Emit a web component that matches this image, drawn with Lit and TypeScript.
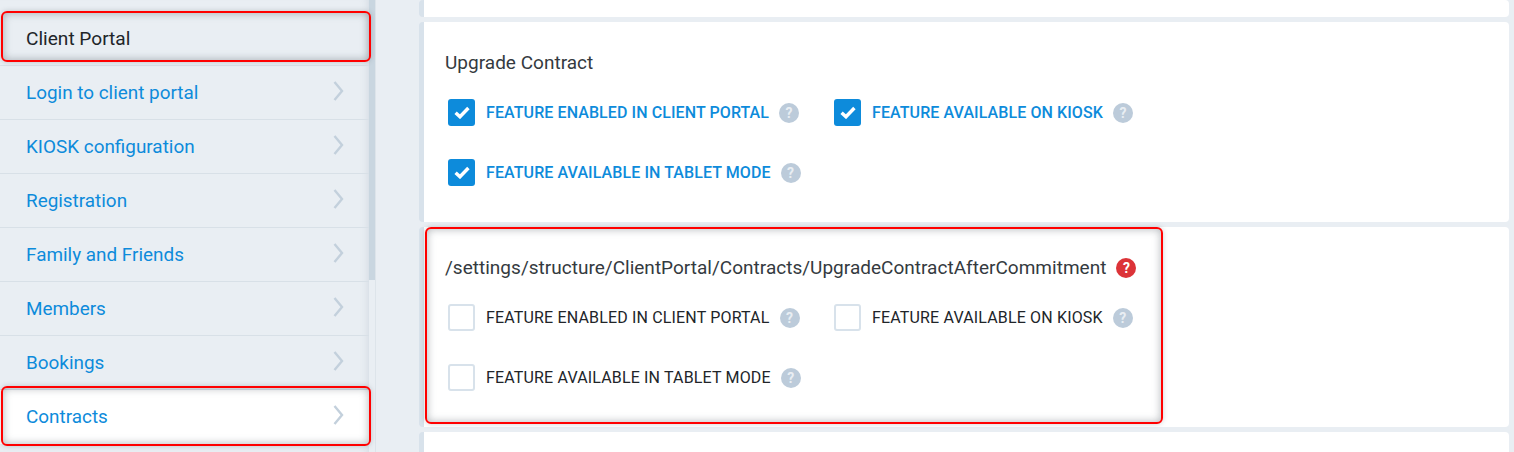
import { LitElement, css, html, nothing } from 'lit';
import { customElement } from 'lit/decorators.js';

const NAV = [
  'Login to client portal',
  'KIOSK configuration',
  'Registration',
  'Family and Friends',
  'Members',
  'Bookings',
  'Contracts',
];

const FIELDS = ['FEATURE ENABLED IN CLIENT PORTAL', 'FEATURE AVAILABLE ON KIOSK', 'FEATURE AVAILABLE IN TABLET MODE'];

@customElement('app-root')
export class AppRoot extends LitElement {
  static styles = css`
    :host {
      display: block;
      position: relative;
      width: 1514px;
      height: 452px;
      overflow: hidden;
      background: #e9eef3;
      font-family: Roboto, sans-serif;
    }

    * {
      box-sizing: border-box;
    }

    .layout {
      display: flex;
      height: 452px;
    }

    /* left menu */
    .sidebar {
      width: 369px;
      flex: none;
      padding-top: 12px;
      box-shadow: inset -8px 0 8px -8px rgba(120, 140, 160, 0.25);
    }

    .nav-head {
      height: 54px;
      display: flex;
      align-items: center;
      padding: 0 26px;
      font-size: 19.1px;
      color: #212529;
      border-bottom: 1px solid #d8e0e7;
    }

    .nav-item {
      height: 54px;
      display: flex;
      align-items: center;
      justify-content: space-between;
      padding: 0 25px 0 26px;
      font-size: 18.9px;
      color: #0d8bdb;
      border-bottom: 1px solid #d8e0e7;
    }

    .nav-item.active {
      background: #fff;
      border-bottom-color: transparent;
    }

    .chevron {
      width: 11px;
      height: 20px;
      margin-top: -3px;
      fill: none;
      stroke: #c3d0dc;
      stroke-width: 2.4;
    }

    .scrollbar {
      width: 7px;
      flex: none;
      background: #e9eef3;
      border-right: 1px solid #dde4ea;
    }

    .scrollbar-thumb {
      width: 6px;
      height: 280px;
      background: #c9d6e0;
    }

    /* settings cards */
    .content {
      margin-left: 43px;
      width: 1090px;
      display: flex;
      flex-direction: column;
      gap: 5px;
    }

    .card {
      flex: none;
      height: 200px;
      background: #fff;
      border-left: 5px solid #d8e2eb;
      border-radius: 4px;
      padding: 30px 0 0 21px;
    }

    .card.stub {
      height: 17px;
      padding: 0;
    }

    .card.tail {
      height: 40px;
    }

    .card-title {
      display: flex;
      align-items: center;
      gap: 10px;
      height: 21px;
      font-size: 19px;
      letter-spacing: 0.015px;
      color: #343a40;
    }

    .fields {
      display: grid;
      grid-template-columns: 386px auto;
      justify-content: start;
      row-gap: 33px;
      margin: 26px 0 0 3px;
    }

    .field {
      display: flex;
      align-items: center;
      height: 27px;
      font-size: 16px;
      font-weight: 400;
      letter-spacing: 0.16px;
      color: #212529;
    }

    .field.on {
      color: #0d8bdb;
      font-weight: 500;
      letter-spacing: 0.09px;
    }

    .box {
      width: 27px;
      height: 27px;
      flex: none;
      margin-right: 11px;
      border: 2px solid #d8e2eb;
      border-radius: 3px;
      background: #fff;
    }

    .on .box {
      border: none;
      background: #0d8bdb;
      display: flex;
      align-items: center;
      justify-content: center;
    }

    .tick {
      width: 16px;
      height: 13px;
      fill: none;
      stroke: #fff;
      stroke-width: 3.2;
    }

    .help {
      width: 20px;
      height: 20px;
      flex: none;
      margin-left: 10px;
      border-radius: 50%;
      background: #bccbda;
      color: #e9eef3;
      font-size: 14px;
      font-weight: 700;
      display: flex;
      align-items: center;
      justify-content: center;
    }

    .help.error {
      margin-left: 0;
      background: #dc3338;
      color: #fff;
    }

    /* red annotation boxes drawn over the screenshot */
    .mark {
      position: absolute;
      border: 2px solid #f00;
      border-radius: 6px;
      box-shadow: inset 0 0 8px rgba(60, 70, 80, 0.4), 0 0 5px rgba(60, 70, 80, 0.25);
      pointer-events: none;
    }

    .mark-head {
      left: 1px;
      top: 11px;
      width: 370px;
      height: 51px;
    }

    .mark-contracts {
      left: 1px;
      top: 386px;
      width: 370px;
      height: 60px;
    }

    .mark-card {
      left: 425px;
      top: 227px;
      width: 738px;
      height: 197px;
    }
  `;

  private renderFields(on: boolean) {
    return html`
      <div class="fields">
        ${FIELDS.map(
          (label) => html`
            <div class="field ${on ? 'on' : ''}">
              <span class="box">
                ${on
                  ? html`<svg class="tick" viewBox="0 0 15 12"><path d="M1.5 6.2 5.6 10 13.5 1.8" /></svg>`
                  : nothing}
              </span>
              <span>${label}</span>
              <span class="help">?</span>
            </div>
          `,
        )}
      </div>
    `;
  }

  render() {
    return html`
      <div class="layout">
        <nav class="sidebar">
          <div class="nav-head">Client Portal</div>
          ${NAV.map(
            (item) => html`
              <div class="nav-item ${item === 'Contracts' ? 'active' : ''}">
                <span>${item}</span>
                <svg class="chevron" viewBox="0 0 11 20"><path d="M1.5 1 9 10 1.5 19" /></svg>
              </div>
            `,
          )}
        </nav>
        <div class="scrollbar"><div class="scrollbar-thumb"></div></div>
        <main class="content">
          <section class="card stub"></section>
          <section class="card">
            <div class="card-title">Upgrade Contract</div>
            ${this.renderFields(true)}
          </section>
          <section class="card">
            <div class="card-title">
              /settings/structure/ClientPortal/Contracts/UpgradeContractAfterCommitment
              <span class="help error">?</span>
            </div>
            ${this.renderFields(false)}
          </section>
          <section class="card tail"></section>
        </main>
      </div>
      <div class="mark mark-head"></div>
      <div class="mark mark-contracts"></div>
      <div class="mark mark-card"></div>
    `;
  }
}
